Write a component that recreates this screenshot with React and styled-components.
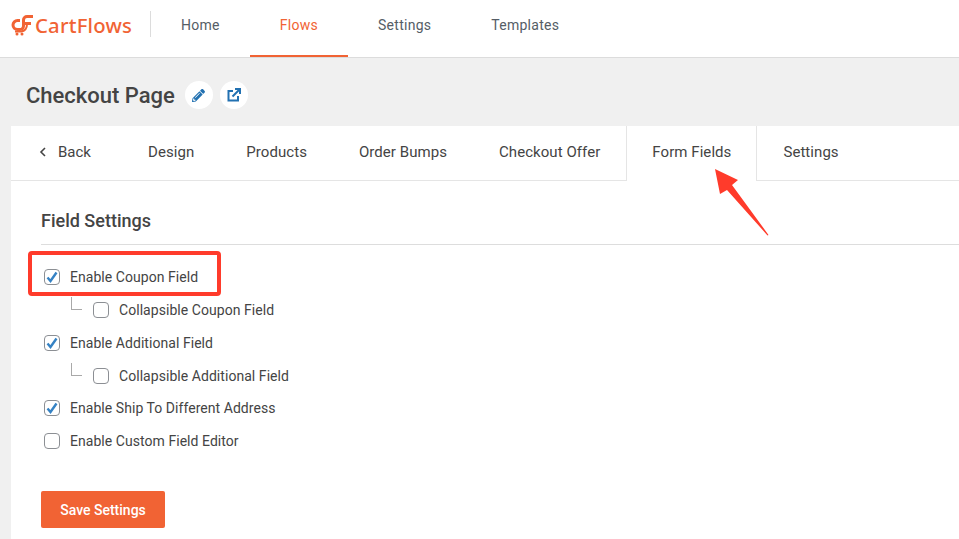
import React from 'react';
import styled, { createGlobalStyle } from 'styled-components';
import { FaPencilAlt } from 'react-icons/fa';

const GlobalStyle = createGlobalStyle`
  html, body {
    margin: 0;
    padding: 0;
    background-color: #f0f0f0;
    font-family: Roboto, "Liberation Sans", sans-serif;
    overflow: hidden;
  }
`;

const Page = styled.div`
  position: relative;
  width: 959px;
  height: 539px;
  overflow: hidden;
`;

const Header = styled.header`
  display: flex;
  align-items: stretch;
  height: 57px;
  background-color: #fff;
  border-bottom: 1px solid #dcdcdc;
`;

const Logo = styled.div`
  display: flex;
  align-items: center;
  gap: 2px;
  width: 150px;
  padding: 0 0 8px 11px;
  box-sizing: border-box;
  color: #f16334;
  font-family: "Noto Sans", sans-serif;
  font-size: 20.3px;
  font-weight: 500;
  letter-spacing: 0.2px;
`;

const Divider = styled.div`
  width: 1px;
  height: 26px;
  margin-top: 11px;
  background-color: #dcdcdc;
`;

const Nav = styled.nav`
  display: flex;
`;

const NavItem = styled.a`
  display: flex;
  align-items: center;
  padding: 0 30px 6px;
  height: 57px;
  box-sizing: border-box;
  font-size: 14px;
  letter-spacing: 0.27px;
  color: ${(p) => (p.$active ? '#f16334' : '#555d66')};
  border-bottom: 2px solid ${(p) => (p.$active ? '#f16334' : 'transparent')};
`;

const TitleBar = styled.div`
  display: flex;
  align-items: center;
  height: 68px;
  box-sizing: border-box;
  padding: 6px 0 0 26px;
`;

const Title = styled.h1`
  margin: 0 10px 0 0;
  font-size: 22px;
  font-weight: 500;
  color: #444;
`;

const RoundButton = styled.span`
  display: flex;
  align-items: center;
  justify-content: center;
  width: 28px;
  height: 28px;
  margin-right: 7px;
  border-radius: 50%;
  background-color: #fff;
  color: #2271b1;
  font-size: 13px;
`;

const Panel = styled.main`
  margin-left: 11px;
  height: 413px;
  background-color: #fff;
`;

const Tabs = styled.div`
  display: flex;
  height: 55px;
  border-bottom: 1px solid #e5e5e5;
  box-sizing: border-box;
  padding-left: 28px;
`;

const BackTab = styled.a`
  display: flex;
  align-items: center;
  gap: 11px;
  width: 83px;
  padding-bottom: 2px;
  box-sizing: border-box;
  font-size: 15px;
  color: #444;
`;

const Tab = styled.a`
  display: flex;
  align-items: center;
  height: ${(p) => (p.$active ? '55px' : '54px')};
  padding: 0 ${(p) => (p.$active ? '25px 3px' : '26px 2px')};
  font-size: 15px;
  letter-spacing: 0.06px;
  color: #444;
  box-sizing: border-box;
  background-color: #fff;
  ${(p) => p.$active && 'border-left: 1px solid #e5e5e5; border-right: 1px solid #e5e5e5;'}
`;

const Body = styled.section`
  padding: 0 0 0 30px;
`;

const SectionTitle = styled.h2`
  margin: 0;
  padding: 29px 0 12px;
  font-size: 18px;
  line-height: 22px;
  font-weight: 500;
  color: #444;
  border-bottom: 1px solid #ddd;
`;

const Fields = styled.div`
  display: flex;
  flex-direction: column;
  padding-top: 15px;
`;

const Row = styled.label`
  position: relative;
  display: flex;
  align-items: center;
  height: 33px;
  margin-top: ${(p) => (p.$tight ? '-1px' : '0')};
  padding-left: ${(p) => (p.$nested ? '52px' : '3px')};
  font-size: 14px;
  letter-spacing: 0.05px;
  color: #444;
`;

const Elbow = styled.span`
  position: absolute;
  left: 30px;
  top: 4px;
  width: 10px;
  height: 12px;
  border-left: 1px solid #a9a9a9;
  border-bottom: 1px solid #a9a9a9;
`;

const Box = styled.span`
  display: flex;
  align-items: center;
  justify-content: center;
  flex: none;
  box-sizing: border-box;
  width: 16px;
  height: 16px;
  margin-right: 10px;
  border: 1px solid #8c8f94;
  border-radius: 4px;
  background-color: #fff;
  color: #3582c4;
`;

const SaveButton = styled.button`
  display: block;
  width: 124px;
  height: 37px;
  margin-top: 34px;
  padding: 1px 0 0;
  border: none;
  border-radius: 2px;
  background-color: #f16334;
  color: #fff;
  font-family: Roboto, sans-serif;
  font-size: 14px;
  font-weight: 500;
`;

const Highlight = styled.div`
  position: absolute;
  left: 28px;
  top: 251px;
  width: 193px;
  height: 45px;
  box-sizing: border-box;
  border: 4px solid #ff3b2b;
  border-radius: 4px;
`;

const Arrow = styled.svg`
  position: absolute;
  left: 710px;
  top: 165px;
`;

const CartLogo = () => (
  <svg width="22" height="22" viewBox="0 0 22 22" fill="none" stroke="#f16334">
    <path d="M9 6.500H6.500a4.500 4.500 0 0 0 0 9H9a3.500 3.500 0 0 0 3.500-3.500V6A3.500 3.500 0 0 1 16 2.500H22" strokeWidth="3" />
    <path d="M12 9.500H20" strokeWidth="3" />
    <path d="M16 10c0 4-2 7-6 7.500H4" strokeWidth="2" />
    <circle cx="6" cy="20" r="1.500" fill="#f16334" stroke="none" />
    <circle cx="11" cy="20" r="1.500" fill="#f16334" stroke="none" />
  </svg>
);

const LinkIcon = () => (
  <svg width="14" height="14" viewBox="0 0 14 14" fill="none" stroke="currentColor" strokeWidth="2">
    <path d="M6 3H1.500V12.500H11V8" />
    <path d="M5.500 8.500 12 2" />
    <path d="M8 1H13V6" />
  </svg>
);

const Check = () => (
  <svg width="12" height="12" viewBox="0 0 12 12" fill="none">
    <path d="M1.500 6.500 4.500 10 10.500 1.500" stroke="currentColor" strokeWidth="2.400" />
  </svg>
);

const Chevron = () => (
  <svg width="8" height="10" viewBox="0 0 8 10" fill="none">
    <path d="M6 1 2 5l4 4" stroke="#444" strokeWidth="1.600" />
  </svg>
);

const fields = [
  { label: 'Enable Coupon Field', checked: true },
  { label: 'Collapsible Coupon Field', nested: true },
  { label: 'Enable Additional Field', checked: true },
  { label: 'Collapsible Additional Field', nested: true },
  { label: 'Enable Ship To Different Address', checked: true, tight: true },
  { label: 'Enable Custom Field Editor' },
];

const tabs = ['Design', 'Products', 'Order Bumps', 'Checkout Offer', 'Form Fields', 'Settings'];

const App = () => {
  return (
    <Page>
      <GlobalStyle />
      <Header>
        <Logo>
          <CartLogo />
          CartFlows
        </Logo>
        <Divider />
        <Nav>
          <NavItem>Home</NavItem>
          <NavItem $active>Flows</NavItem>
          <NavItem>Settings</NavItem>
          <NavItem>Templates</NavItem>
        </Nav>
      </Header>
      <TitleBar>
        <Title>Checkout Page</Title>
        <RoundButton><FaPencilAlt /></RoundButton>
        <RoundButton><LinkIcon /></RoundButton>
      </TitleBar>
      <Panel>
        <Tabs>
          <BackTab><Chevron />Back</BackTab>
          {tabs.map((tab) => (
            <Tab key={tab} $active={tab === 'Form Fields'}>{tab}</Tab>
          ))}
        </Tabs>
        <Body>
          <SectionTitle>Field Settings</SectionTitle>
          <Fields>
            {fields.map((field) => (
              <Row key={field.label} $nested={field.nested} $tight={field.tight}>
                {field.nested && <Elbow />}
                <Box>{field.checked && <Check />}</Box>
                {field.label}
              </Row>
            ))}
          </Fields>
          <SaveButton>Save Settings</SaveButton>
        </Body>
      </Panel>
      <Highlight />
      <Arrow width="64" height="76" viewBox="0 0 64 76">
        <path d="M5 4 28 15 22 20 58.500 70 57.500 70.500 17 25 10 29Z" fill="#ff3b2b" />
      </Arrow>
    </Page>
  );
};

export default App;
